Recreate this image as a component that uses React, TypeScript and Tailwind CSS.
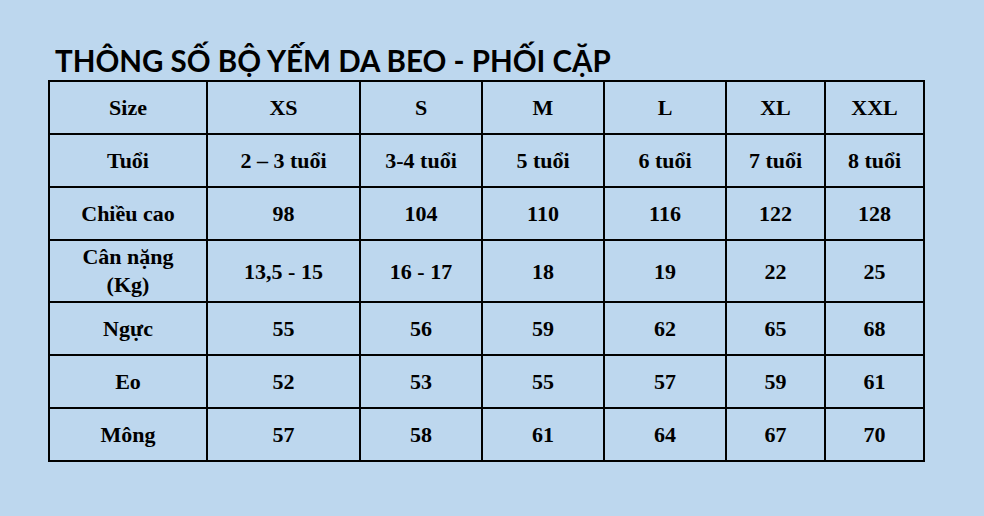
export default function App() {
  const cols = ["w-[158px]", "w-[153px]", "w-[122px]", "w-[122px]", "w-[122px]", "w-[99px]", "w-[99px]"];
  const rows: { label: React.ReactNode; values: string[]; tall?: boolean }[] = [
    { label: "Size", values: ["XS", "S", "M", "L", "XL", "XXL"] },
    { label: "Tuổi", values: ["2 – 3 tuổi", "3-4 tuổi", "5 tuổi", "6 tuổi", "7 tuổi", "8 tuổi"] },
    { label: "Chiều cao", values: ["98", "104", "110", "116", "122", "128"] },
    {
      label: (
        <>
          Cân nặng
          <br />
          (Kg)
        </>
      ),
      values: ["13,5 - 15", "16 - 17", "18", "19", "22", "25"],
      tall: true,
    },
    { label: "Ngực", values: ["55", "56", "59", "62", "65", "68"] },
    { label: "Eo", values: ["52", "53", "55", "57", "59", "61"] },
    { label: "Mông", values: ["57", "58", "61", "64", "67", "70"] },
  ];

  return (
    <div className="w-[984px] h-[516px] bg-[#bdd7ee] overflow-hidden">
      <div className="pl-[48px] pt-[41px]">
        <h1 className="pl-[7px] font-['Lato',sans-serif] font-bold text-[29.5px] leading-[39px] text-black">
          THÔNG SỐ BỘ YẾM DA BEO - PHỐI CẶP
        </h1>
        <table className="table-fixed border-collapse border-2 border-black w-[877px] font-['Liberation_Serif',serif] font-bold text-[22px] text-black">
          <colgroup>
            {cols.map((c, i) => (
              <col key={i} className={c} />
            ))}
          </colgroup>
          <tbody>
            {rows.map((r, i) => (
              <tr key={i} className={r.tall ? "h-[62px]" : "h-[53px]"}>
                <td className="border-2 border-black text-center align-middle leading-[28px]">{r.label}</td>
                {r.values.map((v, j) => (
                  <td key={j} className="border-2 border-black text-center align-middle">
                    {v}
                  </td>
                ))}
              </tr>
            ))}
          </tbody>
        </table>
      </div>
    </div>
  );
}
